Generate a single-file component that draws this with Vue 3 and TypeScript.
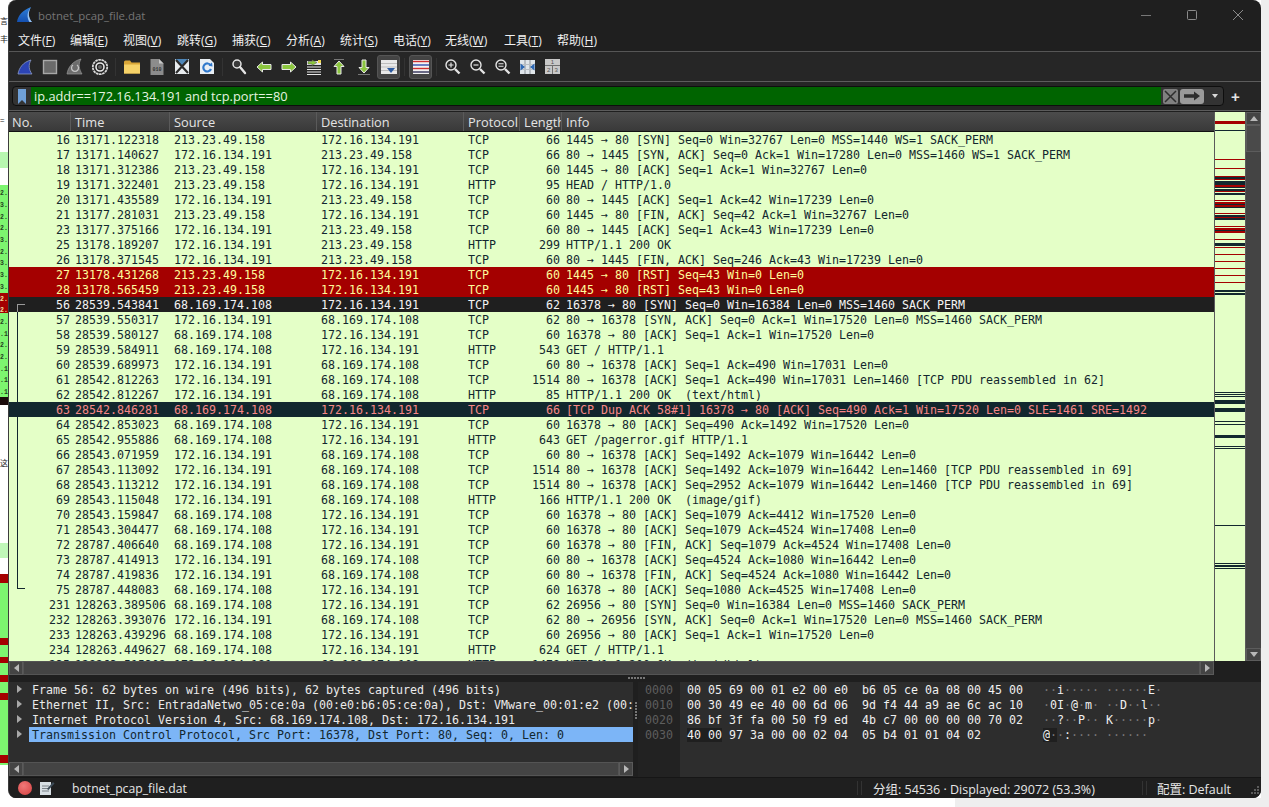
<script setup lang="ts">
type Kind = 'n' | 'red' | 'sel' | 'bad'
interface Row { k: Kind; c: string[] }

const A = '213.23.49.158'
const B = '172.16.134.191'
const C = '68.169.174.108'

const raw: [Kind, string, string, string, string, string, string, string][] = [
  ['n', '16', '13171.122318', A, B, 'TCP', '66', '1445 → 80 [SYN] Seq=0 Win=32767 Len=0 MSS=1440 WS=1 SACK_PERM'],
  ['n', '17', '13171.140627', B, A, 'TCP', '66', '80 → 1445 [SYN, ACK] Seq=0 Ack=1 Win=17280 Len=0 MSS=1460 WS=1 SACK_PERM'],
  ['n', '18', '13171.312386', A, B, 'TCP', '60', '1445 → 80 [ACK] Seq=1 Ack=1 Win=32767 Len=0'],
  ['n', '19', '13171.322401', A, B, 'HTTP', '95', 'HEAD / HTTP/1.0'],
  ['n', '20', '13171.435589', B, A, 'TCP', '60', '80 → 1445 [ACK] Seq=1 Ack=42 Win=17239 Len=0'],
  ['n', '21', '13177.281031', A, B, 'TCP', '60', '1445 → 80 [FIN, ACK] Seq=42 Ack=1 Win=32767 Len=0'],
  ['n', '23', '13177.375166', B, A, 'TCP', '60', '80 → 1445 [ACK] Seq=1 Ack=43 Win=17239 Len=0'],
  ['n', '25', '13178.189207', B, A, 'HTTP', '299', 'HTTP/1.1 200 OK'],
  ['n', '26', '13178.371545', B, A, 'TCP', '60', '80 → 1445 [FIN, ACK] Seq=246 Ack=43 Win=17239 Len=0'],
  ['red', '27', '13178.431268', A, B, 'TCP', '60', '1445 → 80 [RST] Seq=43 Win=0 Len=0'],
  ['red', '28', '13178.565459', A, B, 'TCP', '60', '1445 → 80 [RST] Seq=43 Win=0 Len=0'],
  ['sel', '56', '28539.543841', C, B, 'TCP', '62', '16378 → 80 [SYN] Seq=0 Win=16384 Len=0 MSS=1460 SACK_PERM'],
  ['n', '57', '28539.550317', B, C, 'TCP', '62', '80 → 16378 [SYN, ACK] Seq=0 Ack=1 Win=17520 Len=0 MSS=1460 SACK_PERM'],
  ['n', '58', '28539.580127', C, B, 'TCP', '60', '16378 → 80 [ACK] Seq=1 Ack=1 Win=17520 Len=0'],
  ['n', '59', '28539.584911', C, B, 'HTTP', '543', 'GET / HTTP/1.1'],
  ['n', '60', '28539.689973', B, C, 'TCP', '60', '80 → 16378 [ACK] Seq=1 Ack=490 Win=17031 Len=0'],
  ['n', '61', '28542.812263', B, C, 'TCP', '1514', '80 → 16378 [ACK] Seq=1 Ack=490 Win=17031 Len=1460 [TCP PDU reassembled in 62]'],
  ['n', '62', '28542.812267', B, C, 'HTTP', '85', 'HTTP/1.1 200 OK  (text/html)'],
  ['bad', '63', '28542.846281', C, B, 'TCP', '66', '[TCP Dup ACK 58#1] 16378 → 80 [ACK] Seq=490 Ack=1 Win=17520 Len=0 SLE=1461 SRE=1492'],
  ['n', '64', '28542.853023', C, B, 'TCP', '60', '16378 → 80 [ACK] Seq=490 Ack=1492 Win=17520 Len=0'],
  ['n', '65', '28542.955886', C, B, 'HTTP', '643', 'GET /pagerror.gif HTTP/1.1'],
  ['n', '66', '28543.071959', B, C, 'TCP', '60', '80 → 16378 [ACK] Seq=1492 Ack=1079 Win=16442 Len=0'],
  ['n', '67', '28543.113092', B, C, 'TCP', '1514', '80 → 16378 [ACK] Seq=1492 Ack=1079 Win=16442 Len=1460 [TCP PDU reassembled in 69]'],
  ['n', '68', '28543.113212', B, C, 'TCP', '1514', '80 → 16378 [ACK] Seq=2952 Ack=1079 Win=16442 Len=1460 [TCP PDU reassembled in 69]'],
  ['n', '69', '28543.115048', B, C, 'HTTP', '166', 'HTTP/1.1 200 OK  (image/gif)'],
  ['n', '70', '28543.159847', C, B, 'TCP', '60', '16378 → 80 [ACK] Seq=1079 Ack=4412 Win=17520 Len=0'],
  ['n', '71', '28543.304477', C, B, 'TCP', '60', '16378 → 80 [ACK] Seq=1079 Ack=4524 Win=17408 Len=0'],
  ['n', '72', '28787.406640', C, B, 'TCP', '60', '16378 → 80 [FIN, ACK] Seq=1079 Ack=4524 Win=17408 Len=0'],
  ['n', '73', '28787.414913', B, C, 'TCP', '60', '80 → 16378 [ACK] Seq=4524 Ack=1080 Win=16442 Len=0'],
  ['n', '74', '28787.419836', B, C, 'TCP', '60', '80 → 16378 [FIN, ACK] Seq=4524 Ack=1080 Win=16442 Len=0'],
  ['n', '75', '28787.448083', C, B, 'TCP', '60', '16378 → 80 [ACK] Seq=1080 Ack=4525 Win=17408 Len=0'],
  ['n', '231', '128263.389506', C, B, 'TCP', '62', '26956 → 80 [SYN] Seq=0 Win=16384 Len=0 MSS=1460 SACK_PERM'],
  ['n', '232', '128263.393076', B, C, 'TCP', '62', '80 → 26956 [SYN, ACK] Seq=0 Ack=1 Win=17520 Len=0 MSS=1460 SACK_PERM'],
  ['n', '233', '128263.439296', C, B, 'TCP', '60', '26956 → 80 [ACK] Seq=1 Ack=1 Win=17520 Len=0'],
  ['n', '234', '128263.449627', C, B, 'HTTP', '624', 'GET / HTTP/1.1'],
  ['n', '235', '128263.515302', B, C, 'HTTP', '1478', 'HTTP/1.1 200 OK  (text/html)'],
]
const rows: Row[] = raw.map(([k, ...c]) => ({ k, c }))

const columns = ['No.', 'Time', 'Source', 'Destination', 'Protocol', 'Length', 'Info']

const menus = [
  ['文件(', 'F', ')'], ['编辑(', 'E', ')'], ['视图(', 'V', ')'], ['跳转(', 'G', ')'],
  ['捕获(', 'C', ')'], ['分析(', 'A', ')'], ['统计(', 'S', ')'], ['电话(', 'Y', ')'],
  ['无线(', 'W', ')'], ['工具(', 'T', ')'], ['帮助(', 'H', ')'],
]

const details = [
  'Frame 56: 62 bytes on wire (496 bits), 62 bytes captured (496 bits)',
  'Ethernet II, Src: EntradaNetwo_05:ce:0a (00:e0:b6:05:ce:0a), Dst: VMware_00:01:e2 (00:',
  'Internet Protocol Version 4, Src: 68.169.174.108, Dst: 172.16.134.191',
  'Transmission Control Protocol, Src Port: 16378, Dst Port: 80, Seq: 0, Len: 0',
]

const hex = [
  ['0000', '00 05 69 00 01 e2 00 e0  b6 05 ce 0a 08 00 45 00', '··i····· ······E·'],
  ['0010', '00 30 49 ee 40 00 6d 06  9d f4 44 a9 ae 6c ac 10', '·0I·@·m· ··D··l··'],
  ['0020', '86 bf 3f fa 00 50 f9 ed  4b c7 00 00 00 00 70 02', '··?··P·· K·····p·'],
  ['0030', '40 00 97 3a 00 00 02 04  05 b4 01 01 04 02', '@··:···· ······'],
]

// Packet-map stripes: [top, height, colour] measured from the list's top edge (y=112).
const R = '#a40000'
const D = '#12272e'
const marks: [number, number, string][] = [
  [9, 3, R], [18, 1, D], [47, 1, R], [56, 1, R], [64, 1, R],
  [65, 2, D], [67, 1, R], [69, 2, D], [71, 2, D], [73, 2, R], [75, 1, D],
  [77, 2, D], [79, 1, R], [81, 2, D],
  [88, 1, R], [90, 2, R], [92, 1, D], [93, 2, R], [95, 1, D],
  [101, 1, R], [103, 2, D], [105, 1, R], [106, 2, D],
  [114, 1, R], [116, 2, R], [118, 1, D], [119, 2, R],
  [127, 1, R], [131, 3, D], [135, 1, R], [142, 1, R], [149, 1, R], [156, 1, R], [163, 1, R], [170, 1, R],
  [178, 2, D], [181, 2, D],
  [280, 1, D], [282, 1, D], [284, 1, D], [288, 4, D], [296, 4, D], [309, 1, D], [312, 1, D],
  [323, 3, D], [334, 1, D], [336, 1, D], [413, 1, D], [451, 1, D], [453, 2, D], [456, 1, D],
]

// Fragments of the window behind, visible in the 8px strip on the left.
const behind: [number, number, string][] = [
  [152, 16, '#b8f7b0'], [185, 108, '#7df56f'], [293, 20, '#a40000'], [313, 84, '#7df56f'], [397, 8, '#1a0a0a'],
  [543, 15, '#c0f7b8'], [574, 9, '#a40000'], [583, 55, '#7df56f'], [638, 7, '#a40000'], [645, 12, '#7df56f'],
  [657, 6, '#a40000'], [663, 12, '#7df56f'], [675, 7, '#a40000'], [682, 11, '#7df56f'], [693, 7, '#a40000'],
  [700, 55, '#7df56f'], [755, 8, '#a40000'], [763, 2, '#7df56f'],
]
const behindText = [
  ['2.', 190], ['3.', 202], ['2.', 214], ['2.', 225], ['3.', 237], ['2.', 249], ['3.', 260], ['3.', 272], ['3.', 284],
  ['2.', 296], ['2.', 307], ['2.', 319], ['.1', 331], ['2.', 342], ['2.', 354], ['.1', 366], ['.1', 377], ['.1', 389],
] as const

function dotClass(ch: string): string {
  return ch === '·' ? 'dot' : ''
}
</script>

<template>
  <div class="desk">
    <div class="under-bottom"></div>
    <div
      v-for="(b, i) in behind"
      :key="'b' + i"
      class="scrap"
      :style="{ top: b[0] + 'px', height: b[1] + 'px', background: b[2] }"
    ></div>
    <span
      v-for="(t, i) in behindText"
      :key="'t' + i"
      class="scrap-text"
      :class="{ light: t[1] > 293 && t[1] < 313 }"
      :style="{ top: t[1] + 'px' }"
    >{{ t[0] }}</span>
    <span class="scrap-glyph g1">言</span>
    <span class="scrap-glyph g2">丰</span>
    <span class="scrap-glyph g3">=</span>
    <span class="scrap-glyph g4">这</span>

    <section class="win">
      <header class="title">
        <svg class="logo" width="17" height="17" viewBox="0 0 17 17">
          <defs>
            <linearGradient id="tfin" x1="0" y1="0" x2="0" y2="1">
              <stop offset="0" stop-color="#2f7fd8" />
              <stop offset="1" stop-color="#1450b0" />
            </linearGradient>
          </defs>
          <path d="M1 16 C2 9 7 4 15 1 C12 6 12 11 16 16 Z" fill="url(#tfin)" />
          <path d="M15 1 C12 6 12 11 16 16 L13.5 16 C10.5 11 11 6 15 1 Z" fill="#9cc4ee" />
        </svg>
        <span class="title-text">botnet_pcap_file.dat</span>
        <div class="win-ctrls">
          <svg width="12" height="12" viewBox="0 0 12 12"><path d="M1 6.5H11" stroke="#777" fill="none" /></svg>
          <svg width="12" height="12" viewBox="0 0 12 12"><rect x="1.5" y="1.5" width="9" height="9" rx="1" stroke="#8a8a8a" fill="none" /></svg>
          <svg width="12" height="12" viewBox="0 0 12 12"><path d="M1 1L11 11M11 1L1 11" stroke="#8a8a8a" fill="none" /></svg>
        </div>
      </header>

      <nav class="menu">
        <span v-for="(m, i) in menus" :key="i" class="menu-item">{{ m[0] }}<u>{{ m[1] }}</u>{{ m[2] }}</span>
      </nav>

      <div class="tools">
        <span class="tb">
          <svg width="16" height="16" viewBox="0 0 16 16">
            <path d="M1 15 C2 9 6 3 14 1 C11 6 12 11 15 15 Z" fill="#2c44b4" stroke="#8d9cc4" stroke-width=".8" />
          </svg>
        </span>
        <span class="tb">
          <svg width="16" height="16" viewBox="0 0 16 16">
            <rect x="1.5" y="1.5" width="13" height="13" fill="#6a6a6a" stroke="#a8a8a8" stroke-width="1.4" />
          </svg>
        </span>
        <span class="tb">
          <svg width="17" height="17" viewBox="0 0 17 17">
            <path d="M1 16 C2 9 7 3 15 1 C12 6 13 11 16 16 Z" fill="#6c6c6c" stroke="#9a9a9a" stroke-width=".7" />
            <path d="M11 7 A3.5 3.5 0 1 1 7 7" fill="none" stroke="#c4c4c4" stroke-width="1.3" />
          </svg>
        </span>
        <span class="tb">
          <svg width="18" height="18" viewBox="0 0 18 18">
            <circle cx="9" cy="9" r="7.2" fill="none" stroke="#d8d8d8" stroke-width="1.8" stroke-dasharray="2.6 .6" />
            <circle cx="9" cy="9" r="4" fill="none" stroke="#e8e8e8" stroke-width="1.6" />
            <circle cx="9" cy="9" r="2" fill="#666" />
          </svg>
        </span>
        <i class="sep"></i>
        <span class="tb">
          <svg width="18" height="16" viewBox="0 0 18 16">
            <path d="M1 3 Q1 1.5 2.5 1.5 H7 L8.5 3.5 H17 V14.5 H1 Z" fill="#d9a637" />
            <path d="M1 5.5 H17 V14.5 H1 Z" fill="#f6d268" />
          </svg>
        </span>
        <span class="tb">
          <svg width="16" height="18" viewBox="0 0 16 18">
            <path d="M1.5 1 H10 L14.5 5.5 V17 H1.5 Z" fill="#8c8c8c" />
            <path d="M10 1 V5.5 H14.5 Z" fill="#c8c8c8" />
            <text x="8" y="13" class="bits">010</text>
          </svg>
        </span>
        <span class="tb">
          <svg width="16" height="17" viewBox="0 0 16 17">
            <rect x="1" y="1" width="14" height="15" fill="#e8ecef" />
            <path d="M1 1 H15 L8 8 Z" fill="#4e86b8" />
            <path d="M2 2 L14 15 M14 2 L2 15" stroke="#2c2c2c" stroke-width="2.2" />
          </svg>
        </span>
        <span class="tb">
          <svg width="16" height="17" viewBox="0 0 16 17">
            <path d="M1 1 H11 L15 5 V16 H1 Z" fill="#e8eef4" />
            <path d="M11.6 7.2 A4 4 0 1 0 12 11" fill="none" stroke="#2f78cc" stroke-width="2.2" />
            <path d="M9.5 7.8 L13.5 8.6 L13 4.6 Z" fill="#2f78cc" />
          </svg>
        </span>
        <i class="sep"></i>
        <span class="tb">
          <svg width="16" height="17" viewBox="0 0 16 17">
            <circle cx="6" cy="6" r="4" fill="#3a3a3a" stroke="#e4e4e4" stroke-width="1.5" />
            <path d="M9 9 L14 15" stroke="#e4e4e4" stroke-width="2.4" stroke-linecap="round" />
          </svg>
        </span>
        <span class="tb">
          <svg width="16" height="12" viewBox="0 0 16 12">
            <path d="M1 6 L6.5 1 V3.5 H15 V8.5 H6.5 V11 Z" fill="#8cc63f" stroke="#e8e8e8" stroke-width="1" />
          </svg>
        </span>
        <span class="tb">
          <svg width="16" height="12" viewBox="0 0 16 12">
            <path d="M15 6 L9.5 1 V3.5 H1 V8.5 H9.5 V11 Z" fill="#8cc63f" stroke="#e8e8e8" stroke-width="1" />
          </svg>
        </span>
        <span class="tb">
          <svg width="16" height="16" viewBox="0 0 16 16">
            <path d="M1 8 H15 M1 10.5 H15 M1 13 H15 M1 15.5 H15" stroke="#e8e8e8" />
            <rect x="1" y="2" width="14" height="4" fill="#e8e8e8" />
            <path d="M6 1 L11 3.5 L6 6.5 V5 H2 V2.5 H6 Z" fill="#8cc63f" stroke="#555" stroke-width=".5" />
            <rect x="12" y="1" width="3" height="3" fill="#f0d850" />
          </svg>
        </span>
        <span class="tb">
          <svg width="12" height="16" viewBox="0 0 12 16">
            <path d="M1 .5 H11" stroke="#777" />
            <path d="M6 2 L11 7.5 H8 V15 H4 V7.5 H1 Z" fill="#8cc63f" stroke="#e8e8e8" stroke-width="1" />
          </svg>
        </span>
        <span class="tb">
          <svg width="14" height="16" viewBox="0 0 14 16">
            <path d="M1 15.5 H13" stroke="#777" />
            <path d="M7 14 L12 8.5 H9 V1 H5 V8.5 H2 Z" fill="#8cc63f" stroke="#e8e8e8" stroke-width="1" />
          </svg>
        </span>
        <span class="tb on">
          <svg width="16" height="14" viewBox="0 0 16 14">
            <rect x="0" y="0" width="16" height="14" fill="#e8e8e8" />
            <path d="M0 3.5 H16 M0 7 H16 M0 10.5 H16" stroke="#bdbdbd" />
            <path d="M6 8 H14 L10 13 Z" fill="#2c5aa0" />
          </svg>
        </span>
        <i class="sep"></i>
        <span class="tb on">
          <svg width="16" height="14" viewBox="0 0 16 14">
            <rect x="0" y="0" width="16" height="14" fill="#f2f2f2" />
            <path d="M0 1.5 H16" stroke="#d03030" stroke-width="1.4" />
            <path d="M0 5 H16" stroke="#3050b0" stroke-width="1.4" />
            <path d="M0 8.5 H16" stroke="#d03030" stroke-width="1.4" />
            <path d="M0 12 H16" stroke="#303058" stroke-width="1.4" />
          </svg>
        </span>
        <i class="sep"></i>
        <span class="tb">
          <svg width="17" height="17" viewBox="0 0 17 17">
            <circle cx="7" cy="7" r="5" fill="none" stroke="#e4e4e4" stroke-width="1.4" />
            <path d="M4.5 7 H9.5 M7 4.5 V9.5" stroke="#e4e4e4" stroke-width="1.2" />
            <path d="M11 11 L15.5 15.5" stroke="#e4e4e4" stroke-width="2.4" />
          </svg>
        </span>
        <span class="tb">
          <svg width="17" height="17" viewBox="0 0 17 17">
            <circle cx="7" cy="7" r="5" fill="none" stroke="#e4e4e4" stroke-width="1.4" />
            <path d="M4.5 7 H9.5" stroke="#e4e4e4" stroke-width="1.2" />
            <path d="M11 11 L15.5 15.5" stroke="#e4e4e4" stroke-width="2.4" />
          </svg>
        </span>
        <span class="tb">
          <svg width="17" height="17" viewBox="0 0 17 17">
            <circle cx="7" cy="7" r="5" fill="none" stroke="#e4e4e4" stroke-width="1.4" />
            <path d="M4.5 5.8 H9.5 M4.5 8.2 H9.5" stroke="#e4e4e4" stroke-width="1.1" />
            <path d="M11 11 L15.5 15.5" stroke="#e4e4e4" stroke-width="2.4" />
          </svg>
        </span>
        <span class="tb">
          <svg width="15" height="14" viewBox="0 0 15 14">
            <rect x="0" y="0" width="15" height="14" fill="#dfe5ea" />
            <path d="M5 0 V14 M10 0 V14" stroke="#8a9098" />
            <path d="M0 4.5 H15 M0 9.5 H15" stroke="#b8bec4" />
            <path d="M0.5 3.5 L5 7 L0.5 10.5 Z M14.5 3.5 L10 7 L14.5 10.5 Z" fill="#2d68b4" />
          </svg>
        </span>
        <span class="tb">
          <svg width="15" height="15" viewBox="0 0 15 15">
            <rect x="0" y="0" width="15" height="15" fill="#c8c8c8" />
            <path d="M0 6.5 H15 M7.5 6.5 V15" stroke="#6e6e6e" />
            <text x="7.5" y="5" class="cellno">1</text>
            <text x="3.7" y="13" class="cellno">2</text>
            <text x="11.2" y="13" class="cellno">3</text>
          </svg>
        </span>
      </div>

      <div class="filter">
        <div class="filter-box">
          <span class="bookmark">
            <svg width="10" height="15" viewBox="0 0 10 15"><path d="M1 0 H9 V15 L5 11 L1 15 Z" fill="#6fa0d8" /></svg>
          </span>
          <span class="filter-input">ip.addr==172.16.134.191 and tcp.port==80</span>
          <span class="f-clear">
            <svg width="13" height="13" viewBox="0 0 13 13"><path d="M1 1 L12 12 M12 1 L1 12" stroke="#2e2e2e" stroke-width="1.5" /></svg>
          </span>
          <span class="f-apply">
            <svg width="18" height="10" viewBox="0 0 18 10"><path d="M1 3.2 H11 V0.5 L17 5 L11 9.5 V6.8 H1 Z" fill="#2e2e2e" /></svg>
          </span>
          <span class="f-drop"></span>
        </div>
        <span class="f-plus">+</span>
      </div>

      <div class="packets">
        <div class="list">
          <div class="head">
            <span v-for="(c, i) in columns" :key="c" class="hcell" :class="'col' + i">{{ c }}</span>
          </div>
          <div class="body">
            <div v-for="r in rows" :key="r.c[0]" class="row" :class="r.k">
              <span v-for="(v, i) in r.c" :key="i" class="cell" :class="'col' + i">{{ v }}</span>
            </div>
            <div class="bracket"></div>
            <div class="bracket-top"></div>
          </div>
          <div class="hbar">
            <span class="sb-btn"><i class="tri-l"></i></span>
            <span class="sb-thumb"></span>
            <span class="sb-btn"><i class="tri-r"></i></span>
          </div>
        </div>
        <div class="map-col">
          <div class="map">
            <i
              v-for="(m, i) in marks"
              :key="i"
              class="mark"
              :style="{ top: m[0] + 'px', height: m[1] + 'px', background: m[2] }"
            ></i>
          </div>
        </div>
        <div class="vbar">
          <span class="vb-btn"><i class="tri-u"></i></span>
          <span class="vb-thumb"></span>
          <span class="vb-track"></span>
          <span class="vb-btn"><i class="tri-d"></i></span>
        </div>
      </div>

      <div class="split-h"></div>

      <div class="lower">
        <div class="left-pane">
          <div class="detail">
            <div v-for="(d, i) in details" :key="i" class="d-row" :class="{ chosen: i === 3 }">
              <i class="arrow"></i><span class="d-text">{{ d }}</span>
            </div>
          </div>
          <div class="hbar small">
            <span class="sb-btn"><i class="tri-l"></i></span>
            <span class="sb-thumb"></span>
            <span class="sb-btn"><i class="tri-r"></i></span>
          </div>
        </div>
        <div class="split-v"></div>
        <div class="bytes">
          <div class="offsets">
            <div v-for="h in hex" :key="h[0]" class="hx-line">{{ h[0] }}</div>
          </div>
          <div class="hexes">
            <div v-for="(h, i) in hex" :key="h[0]" class="hx-line">
              <template v-if="i === 3"><b class="hl">40 00</b>{{ h[1].slice(5) }}</template>
              <template v-else>{{ h[1] }}</template>
            </div>
          </div>
          <div class="asciis">
            <div v-for="(h, i) in hex" :key="h[0]" class="hx-line">
              <span
                v-for="(ch, j) in h[2].split('')"
                :key="j"
                :class="[dotClass(ch), { hl: i === 3 && j < 2 }]"
              >{{ ch }}</span>
            </div>
          </div>
        </div>
      </div>

      <footer class="status">
        <span class="led"></span>
        <svg class="note" width="16" height="16" viewBox="0 0 16 16">
          <rect x="1" y="2" width="11" height="13" fill="#d8dfe4" />
          <path d="M3 6 H10 M3 8.5 H10 M3 11 H10" stroke="#7b8288" />
          <path d="M8 9 L14 2 L15.5 3.5 L9.5 10 Z" fill="#3d4c58" />
        </svg>
        <span class="st-file">botnet_pcap_file.dat</span>
        <i class="st-sep s1"></i>
        <span class="st-count">分组: 54536 · Displayed: 29072 (53.3%)</span>
        <i class="st-sep s2"></i>
        <span class="st-prof">配置:   Default</span>
        <svg class="grip" width="12" height="12" viewBox="0 0 12 12">
          <path d="M9 1h2v2H9zM6 4h2v2H6zM9 4h2v2H9zM3 7h2v2H3zM6 7h2v2H6zM9 7h2v2H9z" fill="#5c5c5c" />
        </svg>
      </footer>
    </section>
  </div>
</template>

<style scoped>
.desk {
  position: relative;
  width: 1269px;
  height: 807px;
  overflow: hidden;
  background: linear-gradient(to right, #fff 1261px, #eee 1261px);
  font-family: "Open Sans", "Noto Sans", "Noto Sans CJK SC", sans-serif;
}
.under-bottom {
  position: absolute;
  left: 955px;
  right: 0;
  top: 798px;
  bottom: 0;
  background: #eee;
}
.scrap {
  position: absolute;
  left: 0;
  width: 8px;
}
.scrap-text {
  position: absolute;
  left: 0;
  width: 8px;
  font: 700 6.5px/8px "Liberation Mono", monospace;
  color: #24421e;
  white-space: nowrap;
}
.scrap-text.light { color: #f4e0a0; }
.scrap-glyph {
  position: absolute;
  left: 0;
  width: 8px;
  font: 8px/10px "Noto Sans CJK SC", sans-serif;
  color: #222;
  white-space: nowrap;
}
.g1 { top: 16px; }
.g2 { top: 34px; }
.g3 { top: 115px; }
.g4 { top: 458px; }

.win {
  position: absolute;
  left: 8px;
  top: 0;
  width: 1253px;
  height: 798px;
  display: flex;
  flex-direction: column;
  box-sizing: border-box;
  background: #1f1f1f;
  border-left: 1px solid #3c3c3c;
  border-radius: 8px;
  overflow: hidden;
  color: #e8e8e8;
}

.title {
  height: 32px;
  flex: none;
  display: flex;
  align-items: center;
  padding-left: 7px;
}
.logo { margin-right: 5px; margin-top: -3px; }
.title-text {
  font-size: 11.4px;
  color: #757575;
  margin-top: -2px;
}
.win-ctrls {
  margin-left: auto;
  display: flex;
  gap: 34px;
  padding-right: 17px;
  margin-top: -2px;
}

.menu {
  height: 19px;
  flex: none;
  display: flex;
  padding-left: 9px;
  border-bottom: 1px solid #565656;
  font-size: 12px;
  line-height: 18px;
  color: #f0f0f0;
}
.menu-item { white-space: nowrap; width: 54px; }
.menu-item:nth-child(1) { width: 52px; }
.menu-item:nth-child(2) { width: 53px; }
.menu-item:nth-child(4) { width: 55px; }
.menu-item:nth-child(7) { width: 53px; }
.menu-item:nth-child(8) { width: 52px; }
.menu-item:nth-child(9) { width: 59px; }
.menu-item:nth-child(10) { width: 53px; }
.menu-item u { text-underline-offset: 1px; }

.tools {
  height: 30px;
  flex: none;
  display: flex;
  align-items: center;
  padding-left: 3px;
  background: #262626;
  border-bottom: 1px solid #5c5c5c;
  box-sizing: border-box;
}
.tb {
  width: 25px;
  height: 24px;
  flex: none;
  display: flex;
  align-items: center;
  justify-content: center;
  box-sizing: border-box;
  border-radius: 3px;
}
.tb.on {
  width: 23px;
  margin: 0 1px;
  background: #444;
  border: 1px solid #555;
}
.sep {
  width: 7px;
  height: 18px;
  flex: none;
  position: relative;
}
.sep::after {
  content: "";
  position: absolute;
  left: 3px;
  top: 0;
  bottom: 0;
  width: 1px;
  background: #333;
}
.bits {
  font: 700 5px "Liberation Mono", monospace;
  fill: #333;
  text-anchor: middle;
}
.cellno {
  font: 6px "Liberation Sans", sans-serif;
  fill: #555;
  text-anchor: middle;
}

.filter {
  height: 29px;
  flex: none;
  display: flex;
  align-items: center;
  padding-left: 3px;
  background: #252525;
  border-bottom: 1px solid #5c5c5c;
  box-sizing: border-box;
}
.filter-box {
  width: 1212px;
  height: 20px;
  box-sizing: border-box;
  display: flex;
  align-items: center;
  border: 1px solid #0e0e0e;
  border-radius: 4px;
  background: #333;
}
.bookmark {
  width: 18px;
  flex: none;
  display: flex;
  justify-content: center;
}
.filter-input {
  flex: 1;
  height: 18px;
  line-height: 18px;
  background: #006400;
  padding-left: 3px;
  font-size: 12.8px;
  color: #e6f4e0;
  white-space: nowrap;
}
.f-clear {
  width: 15px;
  height: 15px;
  margin-left: 2px;
  background: #808080;
  border-radius: 2px;
  display: flex;
  align-items: center;
  justify-content: center;
}
.f-apply {
  width: 24px;
  height: 15px;
  margin-left: 2px;
  background: #9a9a9a;
  border-radius: 3px;
  display: flex;
  align-items: center;
  justify-content: center;
}
.f-drop {
  margin-left: 8px;
  margin-right: 5px;
  width: 0;
  height: 0;
  border: 3.5px solid transparent;
  border-top: 4px solid #d8d8d8;
  border-bottom: 0;
}
.f-plus {
  margin-left: 7px;
  font: 700 15px/15px "Liberation Sans", sans-serif;
  color: #e4e4e4;
}

.packets {
  height: 564px;
  flex: none;
  margin-top: 1px;
  display: flex;
  background: #1f1f1f;
}
.list {
  width: 1205px;
  flex: none;
  display: flex;
  flex-direction: column;
  min-width: 0;
}
.head,
.row {
  display: grid;
  grid-template-columns: 62px 99px 147px 147px 56px 42px 1fr;
}
.head {
  height: 20px;
  flex: none;
  box-sizing: border-box;
  background: linear-gradient(#4c4c4c, #393939);
  border-bottom: 1px solid #111;
}
.hcell {
  font-size: 12.8px;
  line-height: 20px;
  padding-left: 4px;
  color: #e4e4e4;
  border-right: 1px solid #5a5a5a;
  overflow: hidden;
  white-space: nowrap;
}
.hcell.col0 { padding-left: 3px; }
.hcell.col6 { border-right: 0; }
.body {
  position: relative;
  height: 529px;
  flex: none;
  overflow: hidden;
  background: #e4ffc7;
}
.row {
  height: 15px;
  background: #e4ffc7;
  color: #12272e;
  font: 11.63px/16px "DejaVu Sans Mono", monospace;
  white-space: pre;
}
.row.red { background: #a40000; color: #fffc9c; }
.row.sel { background: #1f1f1f; color: #f4f4f4; }
.row.bad { background: #12272e; color: #f78787; }
.cell {
  height: 15px;
  padding-left: 4px;
  overflow: hidden;
}
.cell.col0 { text-align: right; padding: 0 1px 0 0; }
.cell.col5 { text-align: right; padding: 0 2px 0 0; }
.bracket {
  position: absolute;
  left: 8px;
  top: 180px;
  width: 8px;
  height: 277px;
  box-sizing: border-box;
  border-left: 1px solid #12272e;
  border-bottom: 1px solid #12272e;
}
.bracket-top {
  position: absolute;
  left: 8px;
  top: 172px;
  width: 8px;
  height: 8px;
  box-sizing: border-box;
  border-left: 1px solid #999;
  border-top: 1px solid #999;
}

.hbar {
  height: 15px;
  flex: none;
  display: flex;
  background: #1f1f1f;
}
.sb-btn {
  width: 14px;
  height: 14px;
  flex: none;
  background: #444;
  border: 1px solid #5a5a5a;
  box-sizing: border-box;
  display: flex;
  align-items: center;
  justify-content: center;
}
.sb-thumb {
  flex: 1;
  height: 14px;
  box-sizing: border-box;
  background: #444;
  border: 1px solid #545454;
}
.tri-l,
.tri-r {
  width: 0;
  height: 0;
  border: 4px solid transparent;
}
.tri-l { border-right: 5px solid #b8b8b8; border-left: 0; }
.tri-r { border-left: 5px solid #b8b8b8; border-right: 0; }
.tri-u,
.tri-d {
  width: 0;
  height: 0;
  border: 4px solid transparent;
}
.tri-u { border-bottom: 5px solid #b8b8b8; border-top: 0; }
.tri-d { border-top: 5px solid #b8b8b8; border-bottom: 0; }

.map-col {
  width: 32px;
  flex: none;
}
.map {
  position: relative;
  height: 549px;
  box-sizing: border-box;
  background: #e4ffc7;
  border-left: 1px solid #5a5a5a;
  border-right: 1px solid #5a5a5a;
}
.mark {
  position: absolute;
  left: 0;
  right: 0;
}
.vbar {
  width: 15px;
  height: 549px;
  flex: none;
  display: flex;
  flex-direction: column;
  background: #444;
}
.vb-btn {
  height: 13px;
  flex: none;
  box-sizing: border-box;
  background: #444;
  border: 1px solid #5c5c5c;
  display: flex;
  align-items: center;
  justify-content: center;
}
.vb-thumb {
  height: 27px;
  flex: none;
  box-sizing: border-box;
  background: #4a4a4a;
  border: 1px solid #5c5c5c;
}
.vb-track { flex: 1; background: #444; }

.split-h {
  height: 6px;
  flex: none;
  background: #1f1f1f;
  position: relative;
}
.split-h::after {
  content: "";
  position: absolute;
  left: 619px;
  top: 1px;
  width: 17px;
  height: 2px;
  background: repeating-linear-gradient(to right, #777 0 2px, transparent 2px 3px);
}

.lower {
  height: 95px;
  flex: none;
  display: flex;
}
.left-pane {
  width: 624px;
  flex: none;
  display: flex;
  flex-direction: column;
}
.detail {
  height: 80px;
  flex: none;
  box-sizing: border-box;
  background: #2d2d2d;
  font: 11.63px/16px "DejaVu Sans Mono", monospace;
  overflow: hidden;
}
.d-row {
  height: 15px;
  display: flex;
  white-space: pre;
  color: #eaeaea;
  position: relative;
  padding-left: 23px;
  overflow: hidden;
}
.arrow {
  position: absolute;
  left: 8px;
  top: 3px;
  width: 0;
  height: 0;
  border: 4px solid transparent;
  border-left: 5px solid #a8a8a8;
  border-right: 0;
}
.d-row.chosen { padding-left: 0; }
.d-row.chosen .d-text {
  flex: 1;
  margin-left: 20px;
  padding-left: 3px;
  background: #7cb5f7;
  color: #12272e;
}
.hbar.small { height: 15px; }

.split-v {
  width: 5px;
  flex: none;
  background: #1f1f1f;
  position: relative;
}
.split-v::after {
  content: "";
  position: absolute;
  left: 2px;
  top: 20px;
  width: 2px;
  height: 18px;
  background: repeating-linear-gradient(#777 0 2px, transparent 2px 3px);
}
.bytes {
  flex: 1;
  display: flex;
  background: #2d2d2d;
  font: 11.63px/16px "DejaVu Sans Mono", monospace;
  white-space: pre;
  min-width: 0;
}
.offsets {
  width: 42px;
  flex: none;
  box-sizing: border-box;
  padding-left: 7px;
  background: #222;
  color: #5e5e5e;
}
.hexes {
  width: 363px;
  flex: none;
  box-sizing: border-box;
  padding-left: 7px;
  color: #f0f0f0;
}
.asciis { color: #f0f0f0; }
.hx-line { height: 15px; }
.hl {
  background: #1f1f1f;
  font-weight: 400;
}
.dot { color: #777; }

.status {
  flex: 1;
  position: relative;
  display: flex;
  align-items: center;
  background: #1f1f1f;
  border-top: 1px solid #161616;
  font-size: 12.2px;
  color: #e6e6e6;
}
.led {
  width: 14px;
  height: 14px;
  margin-left: 9px;
  border-radius: 50%;
  background: radial-gradient(circle at 40% 35%, #f07878, #d44040);
  flex: none;
}
.note { margin-left: 7px; flex: none; }
.st-file { margin-left: 17px; }
.st-count {
  position: absolute;
  left: 864px;
  white-space: nowrap;
  font-size: 12.5px;
}
.st-prof {
  position: absolute;
  left: 1148px;
  white-space: pre;
  font-size: 12.5px;
}
.st-sep {
  position: absolute;
  top: 3px;
  bottom: 3px;
  width: 3px;
  border-left: 1px solid #333;
  border-right: 1px solid #333;
}
.s1 { left: 848px; }
.s2 { left: 1133px; }
.grip {
  position: absolute;
  right: 1px;
  bottom: 1px;
}
</style>
